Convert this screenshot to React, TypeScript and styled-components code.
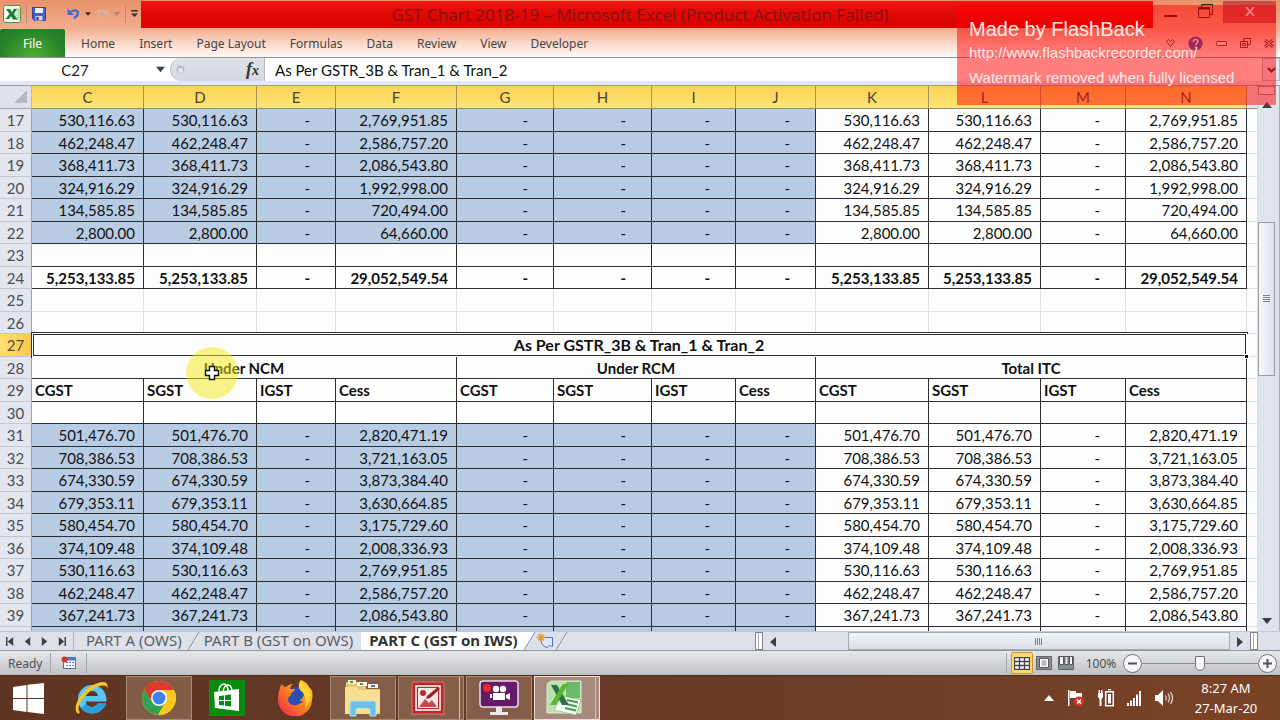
import React from 'react';
import styled, { createGlobalStyle, css } from 'styled-components';

const UI = `"Noto Sans", "Open Sans", sans-serif`;
const SHEET = `Lato, "Open Sans", sans-serif`;

const GlobalStyle = createGlobalStyle`
  * { box-sizing: border-box; }
  html, body, #root { height: 100%; }
  body { margin: 0; overflow: hidden; font-family: ${UI}; font-size: 12px; color: #444; }
  button, input { font: inherit; color: inherit; margin: 0; padding: 0; border: 0; background: none; border-radius: 0; }
  button { display: flex; align-items: center; justify-content: center; cursor: default; }
  svg { display: block; flex: none; }
`;

const Desktop = styled.div`
  position: relative;
  display: flex;
  flex-direction: column;
  height: 100vh;
  overflow: hidden;
  background: #e2e5ec;
`;

/* ---------- window caption and ribbon ---------- */
const Caption = styled.header`
  flex: none;
  background: linear-gradient(#e9916b 0, #f0a482 18px, #f3ae90 29px, #fbdccf 45px, #fffaf8 57px);
  border-bottom: 1px solid #8f9296;
`;
const TitleRow = styled.div`
  display: flex;
  height: 29px;
  padding: 1px 0;
`;
const QuickAccess = styled.div`
  display: flex;
  align-items: center;
  flex: none;
  width: 141px;
  gap: 5px;
  padding: 0 3px 2px;
`;
const Divider = styled.span`
  width: 1px;
  height: 18px;
  background: #b98a78;
`;
const Title = styled.h1`
  flex: 1;
  display: flex;
  align-items: center;
  justify-content: center;
  margin: 0;
  padding-right: 14px;
  background: linear-gradient(#ee1713, #e00807 50%, #d60202);
  color: #8a120e;
  font-size: 17px;
  line-height: 24px;
  font-weight: 400;
  white-space: nowrap;
`;
const WindowButtons = styled.div`
  display: flex;
  flex: none;
  width: 127px;
  padding-right: 4px;
`;
const WindowButton = styled.button<{ $close?: boolean }>`
  flex: ${p => (p.$close ? '0 0 53px' : '1')};
  height: 22px;
  background: ${p => (p.$close ? '#c4504c' : 'transparent')};
  padding-bottom: 2px;
`;
const RibbonRow = styled.nav`
  display: flex;
  height: 28px;
`;
const FileTab = styled.button`
  width: 65px;
  margin-right: 4px;
  color: #fff;
  border-radius: 2px 2px 0 0;
  background: radial-gradient(ellipse at 50% 110%, #55b43a, #2b8a2a 60%, #1c7623);
`;
const RibbonTab = styled.button`
  padding: 0 12px;
  white-space: nowrap;
`;
const RibbonTools = styled.div`
  display: flex;
  align-items: center;
  gap: 13px;
  margin-left: auto;
  padding-right: 6px;
`;

/* ---------- formula bar ---------- */
const FormulaBar = styled.div`
  display: flex;
  flex: none;
  height: 28px;
  padding-bottom: 4px;
  background: #e4e8f0;
  border-bottom: 1px solid #9aa0a8;
`;
const NameBox = styled.input`
  width: 150px;
  text-align: center;
  background: #fff;
  color: #222;
  font-family: ${SHEET};
  font-size: 15px;
`;
const NameDrop = styled.button`
  width: 20px;
  background: #fff;
`;
const FxArea = styled.div`
  display: flex;
  align-items: center;
  justify-content: space-between;
  width: 95px;
  padding: 0 5px 0 5px;
  background: linear-gradient(#dfe2e9, #d4d8e0);
  border: solid #b5bac3;
  border-width: 0 1px;
  border-radius: 12px 0 0 12px;
`;
const FxButton = styled.button`
  align-items: baseline;
  color: #333;
  font: italic bold 18px/20px "Liberation Serif", serif;
`;
const FxArgument = styled.span`
  font-size: 14px;
`;
const FxWrap = styled.div`
  display: flex;
  background: #fff;
`;
const FormulaInput = styled.input`
  flex: 1;
  min-width: 0;
  padding: 0 0 0 10px;
  background: #fff;
  color: #111;
  font-family: ${SHEET};
  font-size: 15px;
`;
const Expand = styled.button`
  width: 18px;
  border: 1px solid #b5bac3;
`;

/* ---------- sheet ---------- */
const Workspace = styled.main`
  display: flex;
  flex: 1;
  min-height: 0;
`;
const GridView = styled.div`
  position: relative;
  flex: 1;
  min-width: 0;
  overflow: hidden;
  background: #fff;
`;
const Grid = styled.table`
  width: 100%;
  table-layout: fixed;
  border-collapse: separate;
  border-spacing: 0;
  font-family: ${SHEET};
  font-size: 15px;
  line-height: 20px;
  color: #111;
`;
const Col = styled.col<{ $w?: number }>`
  width: ${p => (p.$w ? `${p.$w}px` : 'auto')};
`;
const HeadRow = styled.tr`
  height: 23px;
`;
const Row = styled.tr`
  height: 22px;
  &:nth-child(odd) { height: 23px; }
`;
const ColumnHead = styled.th<{ $off?: boolean }>`
  padding: 0;
  font-size: 15px;
  font-weight: 400;
  color: #4c4432;
  background: ${p => (p.$off ? '#e6e9ef' : 'linear-gradient(#fad254, #ffe577)')};
  border-right: 1px solid ${p => (p.$off ? '#d5d9df' : '#a5935a')};
  border-bottom: 1px solid #948a6c;
`;
const Corner = styled.th`
  padding: 0 4px 2px 0;
  background: #dfe2e9;
  border-right: 1px solid #b4b9c2;
  border-bottom: 1px solid #a3a8b0;
  svg { margin-left: auto; }
`;
const RowHead = styled.th<{ $active?: boolean }>`
  padding: 0;
  font-weight: 400;
  color: #4a4d52;
  background: ${p => (p.$active ? 'linear-gradient(90deg, #ffdf6e, #fbc94e)' : '#e3e6ed')};
  border-right: 1px solid #9ea3ab;
  border-bottom: 1px solid #c3c7cf;
`;
type Tone = 'blue' | 'white' | 'plain';
const Cell = styled.td<{ $tone: Tone; $align?: 'left' | 'center'; $bold?: boolean; $dash?: boolean; $selected?: boolean }>`
  position: relative;
  padding: 0 ${p => (p.$dash ? 25 : p.$align ? 0 : 8)}px 0 ${p => (p.$align === 'left' ? 3 : 0)}px;
  text-align: ${p => p.$align ?? 'right'};
  font-weight: ${p => (p.$bold ? 700 : 400)};
  white-space: nowrap;
  background: ${p => (p.$tone === 'blue' ? '#b8cce4' : '#fdfdfe')};
  border: 0 solid ${p => (p.$tone === 'plain' ? '#dcdfe4' : '#2b2e33')};
  border-width: 0 1px 1px 0;
  ${p => p.$selected && css`
    font-size: 16px;
    &::after {
      content: '';
      position: absolute;
      inset: -2px -2px -2px -1px;
      border: 1px solid #2b2e33;
      box-shadow: inset 0 0 0 1px #fff, inset 0 0 0 2px #2b2e33;
    }
  `}
`;
const FillHandle = styled.span`
  position: absolute;
  right: -3px;
  bottom: -3px;
  z-index: 1;
  width: 5px;
  height: 5px;
  background: #111;
  border: 1px solid #fff;
`;
const Pointer = styled.div`
  position: absolute;
  left: 186px;
  top: 261px;
  display: grid;
  place-items: center;
  width: 52px;
  height: 52px;
  border-radius: 50%;
  background: rgba(242, 234, 20, 0.5);
`;

const VScroll = styled.div`
  display: flex;
  flex-direction: column;
  flex: none;
  width: 22px;
  padding-right: 4px;
  background: #dfe4ec;
  border-right: 1px solid #a9adb4;
`;
const SplitBox = styled.span`
  height: 9px;
  border: 1px solid #8b9097;
  background: #f3f4f7;
`;
const ScrollArrow = styled.button<{ $wide?: boolean }>`
  flex: none;
  width: ${p => (p.$wide ? 20 : 17)}px;
  height: 20px;
`;
const VTrack = styled.div`
  display: flex;
  flex-direction: column;
  flex: 1;
`;
const VThumb = styled.div`
  display: grid;
  place-items: center;
  flex: 0 0 31%;
  border: 1px solid #989da6;
  background: linear-gradient(90deg, #f7f8fa, #dde0e8);
`;
const Gap = styled.span<{ $grow: number }>`
  flex: ${p => p.$grow} 1 0;
`;

/* ---------- sheet tabs ---------- */
const TabStrip = styled.div`
  display: flex;
  flex: none;
  height: 20px;
  background: #dde1e9;
  border-bottom: 1px solid #8f949c;
  border-top: 1px solid #c3c7cf;
`;
const TabSide = styled.div`
  display: flex;
  width: 59%;
`;
const TabNav = styled.div`
  display: flex;
  width: 74px;
  margin-right: 8px;
  align-items: center;
  gap: 8px;
  padding-left: 6px;
  border-right: 1px solid #b0b4bc;
`;
const SheetTab = styled.button<{ $active?: boolean }>`
  padding: 0 4px 1px ${p => (p.$active ? 8 : 4)}px;
  margin-left: ${p => (p.$active ? 4 : 0)}px;
  font-size: 15px;
  line-height: 17px;
  white-space: nowrap;
  font-weight: ${p => (p.$active ? 700 : 400)};
  color: ${p => (p.$active ? '#333' : '#5a5e64')};
  background: ${p => (p.$active ? '#fff' : 'transparent')};
`;
const Grip = styled.span`
  flex: none;
  width: 8px;
  border: 1px solid #7f848b;
  background: linear-gradient(90deg, #fff 2px, #a5a9b0 2px, #a5a9b0 3px, #fff 3px);
`;
const HTrack = styled.div`
  display: flex;
  flex: 1;
`;
const HThumb = styled.div`
  display: grid;
  place-items: center;
  flex: 382 1 0;
  border: 1px solid #a7abb3;
  background: linear-gradient(#f3f4f7, #dcdfe6);
`;
const CornerPad = styled.span`
  width: 22px;
`;

/* ---------- status bar ---------- */
const StatusBar = styled.footer`
  display: flex;
  align-items: center;
  flex: none;
  height: 24px;
  padding: 0 3px 0 8px;
  background: linear-gradient(#e6e7ea, #d2d4d8 50%, #bfc1c6);
  color: #4b4e54;
`;
const StatusText = styled.span`
  width: 42px;
`;
const StatusLine = styled.span`
  width: 1px;
  height: 20px;
  background: #a2a5ab;
`;
const MacroButton = styled.button`
  width: 35px;
`;
const ViewButton = styled.button<{ $on?: boolean }>`
  width: 22px;
  height: 22px;
  border-radius: 2px;
  ${p => p.$on && css`
    background: #fbd870;
    border: 1px solid #c9973a;
  `}
`;
const Views = styled.div`
  display: flex;
  margin: 0 8px 0 4px;
`;
const ZoomValue = styled.button`
  width: 32px;
  margin-right: 6px;
`;
const Round = styled.button`
  width: 19px;
  height: 19px;
  border: 1px solid #74777d;
  border-radius: 50%;
  background: #f6f6f8;
`;
const ZoomSlider = styled.input`
  width: 116px;
  height: 19px;
  appearance: none;
  background: linear-gradient(#8d9096, #8d9096) center / 100% 1px no-repeat;
  &::-webkit-slider-thumb {
    appearance: none;
    width: 10px;
    height: 15px;
    border: 1px solid #6c6f75;
    border-radius: 1px 1px 5px 5px;
    background: #f8f8fa;
  }
`;

/* ---------- taskbar ---------- */
const Taskbar = styled.div`
  display: flex;
  flex: none;
  height: 45px;
  background: linear-gradient(90deg, #5e3423 0, #673b27 50%, #6f3e27 75%, #7b4326 100%);
  border-top: 1px solid #4d2b1d;
`;
const StartButton = styled.button`
  width: 57px;
`;
const TaskButton = styled.button<{ $open?: boolean; $active?: boolean; $stack?: boolean }>`
  width: 66px;
  margin: 0 1px;
  ${p => (p.$open || p.$active) && css`
    background: ${p.$active ? '#a78a7c' : 'rgba(180, 150, 125, 0.4)'};
    border: 1px solid ${p.$active ? '#ece0d8' : '#a78b78'};
  `}
  ${p => p.$stack && css`
    padding-right: 6px;
    background-image: linear-gradient(90deg, #d4c0b2, #d4c0b2);
    background-size: 1px 100%;
    background-position: right 3px top;
    background-repeat: no-repeat;
  `}
`;
const Tray = styled.div`
  display: flex;
  align-items: center;
  gap: 13px;
  margin-left: auto;
`;
const Clock = styled.time`
  width: 94px;
  padding-right: 14px;
  color: #fff;
  text-align: center;
  font-size: 13px;
  line-height: 20px;
`;

/* ---------- recorder watermark ---------- */
const Watermark = styled.aside`
  position: absolute;
  top: 5px;
  right: 4px;
  width: 319px;
  height: 100px;
  padding: 12px;
  background: rgba(255, 0, 0, 0.5);
  color: #ffe9e6;
  font-family: "Liberation Sans", sans-serif;
  font-size: 15px;
  line-height: 25px;
  white-space: nowrap;
`;
const WatermarkTitle = styled.div`
  font-size: 20px;
  line-height: 24px;
`;
const WatermarkLink = styled.a`
  display: block;
  color: inherit;
  text-decoration: none;
  line-height: 24px;
`;

type TriProps = { dir: 'up' | 'down' | 'left' | 'right'; size?: number; color?: string; bar?: boolean };
const Tri = ({ dir, size = 8, color = '#3c4048', bar }: TriProps) => {
  const rot = { up: 0, right: 90, down: 180, left: 270 }[dir];
  return (
    <svg width={size + 2} height={size + 2} viewBox="0 0 10 10">
      <g transform={`rotate(${rot} 5 5)`} fill={color}>
        <path d="M5 2 10 8H0z" />
        {bar && <path d="M0 0h10v1.600H0z" />}
      </g>
    </svg>
  );
};

const ExcelSmall = () => (
  <svg width="18" height="18" viewBox="0 0 18 18">
    <rect x=".5" y=".5" width="17" height="17" rx="2" fill="#f5faf3" stroke="#43954a" />
    <path d="M11 4h5v10h-5z" fill="#cfe6c9" stroke="#6cab66" strokeWidth=".6" />
    <path d="M3 4h4l2 3 2-3h3l-3.500 5 4 5.500H10L8 11l-2 3H2.500l4-5z" fill="#1f7d35" />
  </svg>
);
const SaveIcon = () => (
  <svg width="14" height="14" viewBox="0 0 14 14">
    <path d="M.5.5h13v13h-11l-2-2z" fill="#4a5fc4" stroke="#34439c" />
    <path d="M3 1h8v5H3z" fill="#e9eefb" />
    <path d="M3.500 9h7v4.500h-7z" fill="#cdd3ea" />
    <path d="M4.500 10h2v3h-2z" fill="#283583" />
  </svg>
);
const UndoIcon = ({ color, flip }: { color: string; flip?: boolean }) => (
  <svg width="13" height="13" viewBox="0 0 13 13">
    <g transform={flip ? 'translate(13 0) scale(-1 1)' : undefined}>
      <path d="M3 5.500C6 2.500 11 2.500 11 6c0 2.500-2 4-4 5" fill="none" stroke={color} strokeWidth="2.300" />
      <path d="M.5 1.500V8H7z" fill={color} />
    </g>
  </svg>
);

const IEIcon = () => (
  <svg width="36" height="36" viewBox="0 0 36 36">
    <path d="M19 5A14 14 0 0 0 5 19c0 8 6 14.500 14 14.500 6.500 0 12-4 14-10h-8.500c-1 2-3 3.500-5.500 3.500-3.500 0-6-2-6-5.500h20.500C34 12 28 5 19 5zm-6 11c.5-3.500 3-5 6-5s5.500 1.500 6 5z" fill="#58c8f2" />
    <path d="M8 28.500C14 35.500 29 35 33 23.500h-8.500c-2 4.500-9 4.500-11.500 0z" fill="#2a9ddb" />
    <path d="M5.500 34C-2 30 6 13 19 5.500 28 .5 36 0 34.500 8.500 34 5 29 4.500 22 8 11 14 2 28 7 32z" fill="#f6c52c" />
  </svg>
);
const ChromeIcon = () => (
  <svg width="36" height="36" viewBox="0 0 36 36">
    <circle cx="18" cy="18" r="17" fill="#f9c922" />
    <path d="M18 10h14.900a17 17 0 0 0-29.600-.5L11 22z" fill="#dc3b2b" />
    <path d="M3.300 9.500A17 17 0 0 0 17 35l7.500-13L18 26l-7-4z" fill="#35a253" />
    <path d="M32.900 10A17 17 0 0 1 17 35l8-13 .5-12z" fill="#f9c922" />
    <circle cx="18" cy="18" r="8" fill="#fff" />
    <circle cx="18" cy="18" r="6.500" fill="#3f82ee" />
  </svg>
);
const StoreIcon = () => (
  <svg width="36" height="36" viewBox="0 0 36 36">
    <path d="M0 0h36v36H0z" fill="#0b8a10" />
    <path d="M10 13c-1-11 9-12 9-2M14 12c1-9 9-9 9-1" fill="none" stroke="#fff" strokeWidth="1.500" />
    <path d="m5 12 25-3v22L6 28z" fill="#fff" />
    <path d="m10 16 5-.6v4.600h-5zm6-.8 6-.8v5.600h-6zM10 21h5v4.600l-5-.6zm6 0h6v5.500l-6-.8z" fill="#0b8a10" />
  </svg>
);
const FirefoxIcon = () => (
  <svg width="36" height="36" viewBox="0 0 36 36">
    <defs>
      <linearGradient id="fox" x1="1" y1="0" x2="0" y2="1">
        <stop offset="0" stopColor="#ffe23a" />
        <stop offset=".45" stopColor="#ff8a1c" />
        <stop offset="1" stopColor="#f0204f" />
      </linearGradient>
    </defs>
    <circle cx="18" cy="19" r="12" fill="#2b4fb5" />
    <path d="M3 8c0-1 1-3 2-4 1 2 2 3 4 3 2-2 4-3 7-3-2 2-3 3-3 5h5c0 2-3 3-4 5 0 3-3 2-3 5 0 4 4 7 8 6 3 0 5-3 8-3-2-1-4-1-5-2 5-1 7-7 2-12 2 0 4 1 5 3 0-4-3-5-5-7-1-2 0-4 0-4s6 2 8 7c4 3 4 8 3 13a17 17 0 0 1-34-1c0-5 1-8 2-11z" fill="url(#fox)" />
    <path d="M24 0c0 5 7 6 9 13 1 5-1 11-5 15 2-8 1-13-4-17-3-3-3-8 0-11z" fill="#ffd52f" />
  </svg>
);
const FolderIcon = () => (
  <svg width="38" height="38" viewBox="0 0 38 38">
    <path d="M2 3h11l2 3h7v4h14v25H2z" fill="#e8c667" />
    <path d="M4 1h8v4H4z" fill="#f6eecb" />
    <path d="M13 3h10v4H13zM24 5h10v4H24z" fill="#f8f3dc" />
    <path d="M6 2h3v2H6zM16 4h3v2h-3z" fill="#3b9a5d" />
    <path d="M27 6h4v2h-4z" fill="#2f7fc4" />
    <path d="M1 8h12l2 3h21v24H1z" fill="#f6df8e" />
    <path d="M6 37V24q0-2 2-2h22q2 0 2 2v13h-6v-6q0-1.500-1.500-1.500h-11Q12 29.500 12 31v6z" fill="#6cc0e8" stroke="#b5e1f5" />
  </svg>
);
const PictureIcon = () => (
  <svg width="34" height="34" viewBox="0 0 34 34">
    <path d="M1 1h32v32H1z" fill="#b9292b" stroke="#df7773" />
    <path d="M5 5h24v24H5z" fill="none" stroke="#fff" strokeWidth="1.500" />
    <path d="M7 7h20v20H7z" fill="#f7e8e6" />
    <circle cx="12" cy="12" r="3" fill="#b9292b" />
    <path d="m8 26 6-8 4 4 3-3 5 7z" fill="#c84a48" />
    <path d="m16 15 11-9 2 2-10 9-4 1z" fill="#a31e21" />
  </svg>
);
const RecorderIcon = () => (
  <svg width="40" height="36" viewBox="0 0 40 36">
    <rect x="1" y="1" width="38" height="26" rx="3" fill="#641a66" stroke="#e9dcea" strokeWidth="1.500" />
    <path d="M17 27h6v5h6v3H11v-3h6z" fill="#eee9ec" />
    <circle cx="8" cy="8" r="4" fill="#ef2a24" />
    <circle cx="17" cy="9" r="3.200" fill="#fff" />
    <circle cx="24" cy="9" r="3.200" fill="#fff" />
    <path d="M14 13h12v7H14zM27 15l4-2v7l-4-2zM11 14h2v4h-2z" fill="#fff" />
  </svg>
);
const ExcelIcon = () => (
  <svg width="36" height="36" viewBox="0 0 36 36">
    <path d="M7 1h28v32H1V7q0-6 6-6z" fill="#b9e0ad" stroke="#d8f0cf" />
    <path d="M20 2h14v16H20z" fill="#6cba6a" />
    <path d="m16 16 19 4-5 15-22-5z" fill="#f6fbf4" stroke="#8dbb85" strokeWidth=".7" />
    <path d="m21 20 11 2.500M20 24l11 2.500M19 28l11 2.500" stroke="#4b9950" strokeWidth="2" />
    <path d="M5 5h6l12 20h-7z" fill="#2f6f45" />
    <path d="M17 4h5L10 25H4z" fill="#5cb531" />
  </svg>
);

const COLUMNS: [string, number][] = [
  ['C', 112], ['D', 113], ['E', 79], ['F', 121], ['G', 97], ['H', 98],
  ['I', 84], ['J', 80], ['K', 113], ['L', 112], ['M', 85], ['N', 121],
];

type RowData = {
  n: number;
  kind: 'data' | 'blank' | 'total' | 'empty' | 'title' | 'groups' | 'names' | 'edge';
  tax?: string;
  cess?: string;
};
const ROWS: RowData[] = [
  { n: 17, kind: 'data', tax: '530,116.63', cess: '2,769,951.85' },
  { n: 18, kind: 'data', tax: '462,248.47', cess: '2,586,757.20' },
  { n: 19, kind: 'data', tax: '368,411.73', cess: '2,086,543.80' },
  { n: 20, kind: 'data', tax: '324,916.29', cess: '1,992,998.00' },
  { n: 21, kind: 'data', tax: '134,585.85', cess: '720,494.00' },
  { n: 22, kind: 'data', tax: '2,800.00', cess: '64,660.00' },
  { n: 23, kind: 'blank' },
  { n: 24, kind: 'total', tax: '5,253,133.85', cess: '29,052,549.54' },
  { n: 25, kind: 'empty' },
  { n: 26, kind: 'empty' },
  { n: 27, kind: 'title' },
  { n: 28, kind: 'groups' },
  { n: 29, kind: 'names' },
  { n: 30, kind: 'blank' },
  { n: 31, kind: 'data', tax: '501,476.70', cess: '2,820,471.19' },
  { n: 32, kind: 'data', tax: '708,386.53', cess: '3,721,163.05' },
  { n: 33, kind: 'data', tax: '674,330.59', cess: '3,873,384.40' },
  { n: 34, kind: 'data', tax: '679,353.11', cess: '3,630,664.85' },
  { n: 35, kind: 'data', tax: '580,454.70', cess: '3,175,729.60' },
  { n: 36, kind: 'data', tax: '374,109.48', cess: '2,008,336.93' },
  { n: 37, kind: 'data', tax: '530,116.63', cess: '2,769,951.85' },
  { n: 38, kind: 'data', tax: '462,248.47', cess: '2,586,757.20' },
  { n: 39, kind: 'data', tax: '367,241.73', cess: '2,086,543.80' },
  { n: 40, kind: 'edge' },
];

const SheetRow = ({ row }: { row: RowData }) => {
  const { n, kind, tax = '', cess = '' } = row;
  let cells: React.ReactNode;
  if (kind === 'title') {
    cells = (
      <Cell colSpan={12} $tone="white" $align="center" $bold $selected>
        As Per GSTR_3B &amp; Tran_1 &amp; Tran_2
        <FillHandle />
      </Cell>
    );
  } else if (kind === 'groups') {
    cells = ['Under NCM', 'Under RCM', 'Total ITC'].map(g => (
      <Cell key={g} colSpan={4} $tone="white" $align="center" $bold>{g}</Cell>
    ));
  } else if (kind === 'names') {
    cells = COLUMNS.map(([c], i) => (
      <Cell key={c} $tone="white" $align="left" $bold>{['CGST', 'SGST', 'IGST', 'Cess'][i % 4]}</Cell>
    ));
  } else if (kind === 'blank' || kind === 'empty') {
    cells = COLUMNS.map(([c]) => <Cell key={c} $tone={kind === 'blank' ? 'white' : 'plain'} />);
  } else if (kind === 'edge') {
    cells = COLUMNS.map(([c], i) => <Cell key={c} $tone={i < 8 ? 'blue' : 'white'} />);
  } else {
    const side = [tax, tax, '-', cess];
    const values = [...side, '-', '-', '-', '-', ...side];
    cells = values.map((v, i) => (
      <Cell
        key={COLUMNS[i][0]}
        $tone={kind === 'data' && i < 8 ? 'blue' : 'white'}
        $bold={kind === 'total'}
        $dash={v === '-'}
      >
        {v}
      </Cell>
    ));
  }
  return (
    <Row>
      <RowHead scope="row" $active={kind === 'title'}>{kind === 'edge' ? null : n}</RowHead>
      {cells}
      <Cell $tone="plain" />
    </Row>
  );
};

const GripLines = ({ vertical }: { vertical?: boolean }) => (
  <svg width="9" height="9" viewBox="0 0 9 9" stroke="#7c8088">
    <path d={vertical ? 'M1.500 1v7M3.500 1v7M5.500 1v7M7.500 1v7' : 'M1 1.500h7M1 3.500h7M1 5.500h7M1 7.500h7'} />
  </svg>
);
const TabSlope = ({ from, to }: { from: string; to: string }) => (
  <svg width="14" height="18" viewBox="0 0 14 18">
    <path d="M0 0h13L2 18H0z" fill={from} />
    <path d="M14 0v18H2L13 0z" fill={to} />
    <path d="M13 0 2 18" stroke="#8d9199" fill="none" />
  </svg>
);

export default function App() {
  return (
    <Desktop>
      <GlobalStyle />
      <Caption>
        <TitleRow>
          <QuickAccess>
            <ExcelSmall />
            <Divider />
            <button aria-label="Save"><SaveIcon /></button>
            <Gap $grow={1} />
            <button aria-label="Undo"><UndoIcon color="#3c6fd0" /></button>
            <button aria-label="Undo list"><Tri dir="down" size={4} color="#333" /></button>
            <button aria-label="Redo"><UndoIcon color="#d9b0a4" flip /></button>
            <button aria-label="Redo list"><Tri dir="down" size={4} color="#a98476" /></button>
            <Divider />
            <button aria-label="Customize toolbar">
              <svg width="7" height="8" viewBox="0 0 7 8"><path d="M0 0h7v1.500H0zM0 3.500h7L3.500 7z" fill="#333" /></svg>
            </button>
          </QuickAccess>
          <Title>GST Chart 2018-19 – Microsoft Excel (Product Activation Failed)</Title>
          <WindowButtons>
            <WindowButton aria-label="Minimize">
              <svg width="14" height="14" viewBox="0 0 14 14"><path d="M0 11h13v2H0z" fill="#3a1a18" /></svg>
            </WindowButton>
            <WindowButton aria-label="Restore">
              <svg width="15" height="14" viewBox="0 0 15 14" fill="none" stroke="#3a1a18"><path d="M3.500 3V.5h11v10H12" /><path d="M.5 3.500h11v10H.5z" /><path d="M.5 4.500h11" strokeWidth="2" /></svg>
            </WindowButton>
            <WindowButton $close aria-label="Close">
              <svg width="10" height="9" viewBox="0 0 10 9"><path d="m1 0 8 9M9 0 1 9" stroke="#fff" strokeWidth="1.800" /></svg>
            </WindowButton>
          </WindowButtons>
        </TitleRow>
        <RibbonRow>
          <FileTab>File</FileTab>
          {['Home', 'Insert', 'Page Layout', 'Formulas', 'Data', 'Review', 'View', 'Developer'].map(t => (
            <RibbonTab key={t}>{t}</RibbonTab>
          ))}
          <RibbonTools>
            <button aria-label="Expand ribbon">
              <svg width="9" height="8" viewBox="0 0 9 8" fill="none" stroke="#5c3634"><path d="M.5 2.500 2.500.5l2 2 2-2 2 2-4 5z" /></svg>
            </button>
            <button aria-label="Help">
              <svg width="15" height="15" viewBox="0 0 15 15"><circle cx="7.500" cy="7.500" r="7" fill="#3c55b8" /><path d="M5.300 5.800c0-3 4.600-3 4.600-.3 0 1.800-2.300 1.700-2.300 3.500M7.600 10.500v1.800" fill="none" stroke="#fff" strokeWidth="1.600" /></svg>
            </button>
            <button aria-label="Minimize workbook">
              <svg width="11" height="5" viewBox="0 0 11 5"><rect x=".5" y=".5" width="10" height="4" rx="1" fill="#fff" stroke="#5c3634" /></svg>
            </button>
            <button aria-label="Restore workbook">
              <svg width="11" height="10" viewBox="0 0 11 10" fill="none" stroke="#5c3634"><path d="M3.500 3V.5h7v6H8" /><path d="M.5 3.500h7v6h-7zM2.500 5.500h3v2h-3z" /></svg>
            </button>
            <button aria-label="Close workbook">
              <svg width="10" height="9" viewBox="0 0 10 9"><path d="m1 1 8 7M9 1 1 8" stroke="#5c3634" strokeWidth="3" /><path d="m1 1 8 7M9 1 1 8" stroke="#fff" /></svg>
            </button>
          </RibbonTools>
        </RibbonRow>
      </Caption>

      <FormulaBar>
        <NameBox aria-label="Name box" defaultValue="C27" />
        <NameDrop aria-label="Name list"><Tri dir="down" size={7} /></NameDrop>
        <FxWrap>
          <FxArea>
            <svg width="9" height="9" viewBox="0 0 9 9"><circle cx="4.500" cy="4.500" r="4" fill="#b9bdc6" /><circle cx="4.500" cy="5.500" r="2.500" fill="#e4e6eb" /></svg>
            <FxButton aria-label="Insert function">f<FxArgument>x</FxArgument></FxButton>
          </FxArea>
        </FxWrap>
        <FormulaInput aria-label="Formula" defaultValue="As Per GSTR_3B & Tran_1 & Tran_2" />
        <Expand aria-label="Expand formula bar">
          <svg width="9" height="6" viewBox="0 0 9 6"><path d="m1 1 3.500 3.500L8 1" fill="none" stroke="#333" strokeWidth="2" /></svg>
        </Expand>
      </FormulaBar>

      <Workspace>
        <GridView>
          <Grid>
            <colgroup>
              <Col $w={32} />
              {COLUMNS.map(([c, w]) => <Col key={c} $w={w} />)}
              <Col />
            </colgroup>
            <thead>
              <HeadRow>
                <Corner aria-label="Select all">
                  <svg width="13" height="13" viewBox="0 0 13 13"><path d="M13 0v13H0z" fill="#b5b9c1" /></svg>
                </Corner>
                {COLUMNS.map(([c]) => <ColumnHead key={c} scope="col">{c}</ColumnHead>)}
                <ColumnHead $off />
              </HeadRow>
            </thead>
            <tbody>
              {ROWS.map(r => <SheetRow key={r.n} row={r} />)}
            </tbody>
          </Grid>
          <Pointer>
            <svg width="16" height="16" viewBox="0 0 16 16">
              <path d="M5.500 1.500h5v4h4v5h-4v4h-5v-4h-4v-5h4z" fill="#fff" stroke="#111" strokeWidth="1.400" />
            </svg>
          </Pointer>
        </GridView>
        <VScroll>
          <SplitBox />
          <ScrollArrow aria-label="Scroll up"><Tri dir="up" /></ScrollArrow>
          <VTrack>
            <Gap $grow={107} />
            <VThumb><GripLines /></VThumb>
            <Gap $grow={235} />
          </VTrack>
          <ScrollArrow aria-label="Scroll down"><Tri dir="down" /></ScrollArrow>
        </VScroll>
      </Workspace>

      <TabStrip>
        <TabSide>
          <TabNav>
            <button aria-label="First sheet"><Tri dir="left" size={7} bar /></button>
            <button aria-label="Previous sheet"><Tri dir="left" size={7} /></button>
            <button aria-label="Next sheet"><Tri dir="right" size={7} /></button>
            <button aria-label="Last sheet"><Tri dir="right" size={7} bar /></button>
          </TabNav>
          <SheetTab>PART A (OWS)</SheetTab>
          <TabSlope from="#dde1e9" to="#dde1e9" />
          <SheetTab>PART B (GST on OWS)</SheetTab>
          <SheetTab $active>PART C (GST on IWS)</SheetTab>
          <TabSlope from="#fff" to="#dde1e9" />
          <button aria-label="Insert worksheet">
            <svg width="18" height="16" viewBox="0 0 18 16">
              <path d="M5.500 4.500h11v9l-3-1-2 2-3-1-3-3z" fill="#dfe6f6" stroke="#5b6fae" />
              <path d="M5 0v9M.5 4.500h9M2 1.500l6 6M8 1.500l-6 6" stroke="#e39a2c" strokeWidth="1.300" />
            </svg>
          </button>
          <TabSlope from="#dde1e9" to="#dde1e9" />
        </TabSide>
        <Grip />
        <ScrollArrow $wide aria-label="Scroll left"><Tri dir="left" /></ScrollArrow>
        <HTrack>
          <Gap $grow={65} />
          <HThumb><GripLines vertical /></HThumb>
        </HTrack>
        <ScrollArrow $wide aria-label="Scroll right"><Tri dir="right" /></ScrollArrow>
        <Grip />
        <CornerPad />
      </TabStrip>

      <StatusBar>
        <StatusText>Ready</StatusText>
        <StatusLine />
        <MacroButton aria-label="Record macro">
          <svg width="15" height="14" viewBox="0 0 15 14">
            <path d="M2.500 1.500h12v11h-12z" fill="#f4f7fd" stroke="#4f6aa8" />
            <path d="M2.500 1.500h12v3h-12z" fill="#4f78c8" />
            <path d="M5 6.500h2m1 0h2m1 0h2M5 9.500h2m1 0h2m1 0h2" stroke="#5b7dc0" />
            <circle cx="3.500" cy="3.500" r="3" fill="#cf3b2b" />
          </svg>
        </MacroButton>
        <StatusLine />
        <Gap $grow={1} />
        <StatusLine />
        <Views>
          <ViewButton $on aria-label="Normal view">
            <svg width="16" height="13" viewBox="0 0 16 13"><path d="M.5.500h15v12H.5zM.5 4.500h15M.5 8.500h15M5.500.5v12M10.500.5v12" fill="#fff" stroke="#444" strokeWidth="1.300" /></svg>
          </ViewButton>
          <ViewButton aria-label="Page layout view">
            <svg width="16" height="14" viewBox="0 0 16 14"><path d="M.5.500h15v13H.5z" fill="#8c9096" stroke="#606469" /><path d="M3.500 2.500h9v9h-9z" fill="#fff" stroke="#555" /><path d="M5.500 5h5m-5 2h5m-5 2h5" stroke="#777" /></svg>
          </ViewButton>
          <ViewButton aria-label="Page break preview">
            <svg width="16" height="14" viewBox="0 0 16 14"><path d="M.5.500h15v13H.5z" fill="#8c9096" stroke="#606469" /><path d="M1.500.5h4v8h-4zM7 .5h3v8H7zM11.500.5h3v8h-3z" fill="#f4f4f6" stroke="#555" /></svg>
          </ViewButton>
        </Views>
        <ZoomValue>100%</ZoomValue>
        <Round aria-label="Zoom out"><svg width="9" height="9" viewBox="0 0 9 9"><path d="M0 3.500h9v2H0z" fill="#555" /></svg></Round>
        <ZoomSlider type="range" aria-label="Zoom" min={0} max={100} defaultValue={50} />
        <Round aria-label="Zoom in"><svg width="9" height="9" viewBox="0 0 9 9"><path d="M0 3.500h9v2H0zM3.500 0h2v9h-2z" fill="#555" /></svg></Round>
      </StatusBar>

      <Taskbar>
        <StartButton aria-label="Start">
          <svg width="31" height="31" viewBox="0 0 31 31" fill="#fff"><path d="m0 4 13.500-2v13H0zM14.500 1.800 31 0v15H14.500zM0 16h13.500v13L0 27zM14.500 16H31v15l-16.500-2z" /></svg>
        </StartButton>
        <TaskButton aria-label="Internet Explorer"><IEIcon /></TaskButton>
        <TaskButton $open aria-label="Chrome"><ChromeIcon /></TaskButton>
        <TaskButton aria-label="Store"><StoreIcon /></TaskButton>
        <TaskButton aria-label="Firefox"><FirefoxIcon /></TaskButton>
        <TaskButton $open aria-label="File Explorer"><FolderIcon /></TaskButton>
        <TaskButton $open $stack aria-label="Picture Manager"><PictureIcon /></TaskButton>
        <TaskButton $open aria-label="Recorder"><RecorderIcon /></TaskButton>
        <TaskButton $active $stack aria-label="Excel"><ExcelIcon /></TaskButton>
        <Tray>
          <button aria-label="Show hidden icons"><Tri dir="up" size={8} color="#fff" /></button>
          <svg width="18" height="17" viewBox="0 0 18 17"><path d="M1 0h1.500v16H1zM3 1h6v2h6v7H9V8H3z" fill="#fff" /><circle cx="12" cy="11.500" r="5" fill="#d8302c" /><path d="m10 9.500 4 4m0-4-4 4" stroke="#fff" strokeWidth="1.500" /></svg>
          <svg width="16" height="18" viewBox="0 0 16 18"><path d="M7.700 2.700h7.600v14H7.700zM10 .5h3" fill="none" stroke="#fff" strokeWidth="1.600" /><path d="M10 5h3v9.500h-3zM0 4h5v4l-1.500 2v7h-2v-7L0 8zM.5 1H2v3H.5zM3 1h1.500v3H3z" fill="#fff" /></svg>
          <svg width="15" height="15" viewBox="0 0 15 15" fill="#fff"><path d="M0 12h2v3H0zM3 9.500h2V15H3zM6 7h2v8H6zM9 3.500h2V15H9zM12 0h2v15h-2z" /></svg>
          <svg width="18" height="16" viewBox="0 0 18 16"><path d="M0 5h3l5-5v16l-5-5H0z" fill="#fff" /><path d="M10.500 5.500q1.500 2.500 0 5M13 3.500q3 4.500 0 9M15.500 2q4 6 0 12" fill="none" stroke="#e8dcd4" strokeWidth="1.200" /></svg>
          <Clock>8:27 AM<br />27-Mar-20</Clock>
        </Tray>
      </Taskbar>

      <Watermark>
        <WatermarkTitle>Made by FlashBack</WatermarkTitle>
        <WatermarkLink href="#flashback">http://www.flashbackrecorder.com/</WatermarkLink>
        Watermark removed when fully licensed
      </Watermark>
    </Desktop>
  );
}
